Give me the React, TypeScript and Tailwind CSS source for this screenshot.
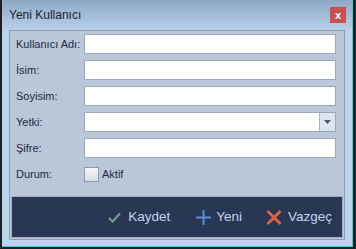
const font = { fontFamily: '"Liberation Sans", Arial, sans-serif' };

const fields = [
  { label: "Kullanıcı Adı:", type: "text" },
  { label: "İsim:", type: "text" },
  { label: "Soyisim:", type: "text" },
  { label: "Yetki:", type: "select" },
  { label: "Şifre:", type: "text" },
];

export default function App() {
  return (
    <div className="w-[356px] h-[249px] bg-[#1d1f22] pl-[2px] overflow-hidden" style={font}>
      <div className="w-[351px] h-[247px] flex flex-col bg-[#bcd3ec] border-r border-b border-[#4cc4ea]">
        {/* Title bar */}
        <div className="h-[30px] flex items-center justify-between pl-[7px] pr-[6px] bg-gradient-to-b from-[#8ea8c6] to-[#bad0ea]">
          <span className="text-[12px] text-[#1b1f27]">Yeni Kullanıcı</span>
          <button className="w-4 h-4 flex items-center justify-center bg-[#c8504f] text-white text-[11px] font-bold leading-none">
            x
          </button>
        </div>

        {/* Body panel */}
        <div className="mx-[7px] h-[210px] flex flex-col border border-[#8d9bb0] bg-[#b9c7d9]">
          <div className="flex flex-col gap-[6px] pt-[3px] pl-[6px] pr-[8px]">
            {fields.map((f) => (
              <div key={f.label} className="h-5 flex items-center">
                <span className="w-[68px] text-[11px] text-[#1f2b3c]">{f.label}</span>
                {f.type === "select" ? (
                  <div className="flex-1 h-5 flex bg-white border border-[#9aa7b9]">
                    <div className="flex-1" />
                    <div className="w-4 h-full flex items-center justify-center bg-[#dce5ef] border-l border-[#a9b6c6]">
                      <svg width="7" height="4" viewBox="0 0 7 4">
                        <path d="M0 0h7L3.5 4z" fill="#4b5567" />
                      </svg>
                    </div>
                  </div>
                ) : (
                  <div className="flex-1 h-5 bg-white border border-[#9aa7b9]" />
                )}
              </div>
            ))}
            <div className="h-5 flex items-center">
              <span className="w-[68px] text-[11px] text-[#1f2b3c]">Durum:</span>
              <div className="w-[15px] h-[15px] bg-gradient-to-b from-[#f4f6f8] to-[#d8dee6] border border-[#8c9aac]" />
              <span className="ml-[3px] text-[11px] text-[#1f2b3c]">Aktif</span>
            </div>
          </div>

          {/* Button bar */}
          <div className="mt-auto mx-px mb-px h-[42px] flex items-center justify-end pr-[10px] bg-[#283753] border border-[#a3adbb]">
            <div className="flex items-center gap-[7px]">
              <svg width="13" height="11" viewBox="0 0 13 11">
                <path d="M1 6l3.5 3.5L12 1.5" fill="none" stroke="#6f9f8b" strokeWidth="2.2" />
              </svg>
              <span className="text-[13.5px] text-[#c3d4ed]">Kaydet</span>
            </div>
            <div className="ml-[26px] flex items-center gap-[5px]">
              <svg width="15" height="15" viewBox="0 0 15 15">
                <path d="M7.5 0v15M0 7.5h15" fill="none" stroke="#5a8fd3" strokeWidth="2" />
              </svg>
              <span className="text-[13.5px] text-[#c3d4ed]">Yeni</span>
            </div>
            <div className="ml-[24px] flex items-center gap-[6px]">
              <svg width="16" height="15" viewBox="0 0 16 15">
                <path d="M1.5 1l13 13M14.5 1l-13 13" fill="none" stroke="#e5633c" strokeWidth="2.8" />
              </svg>
              <span className="text-[13.5px] text-[#c3d4ed]">Vazgeç</span>
            </div>
          </div>
        </div>
      </div>
    </div>
  );
}
